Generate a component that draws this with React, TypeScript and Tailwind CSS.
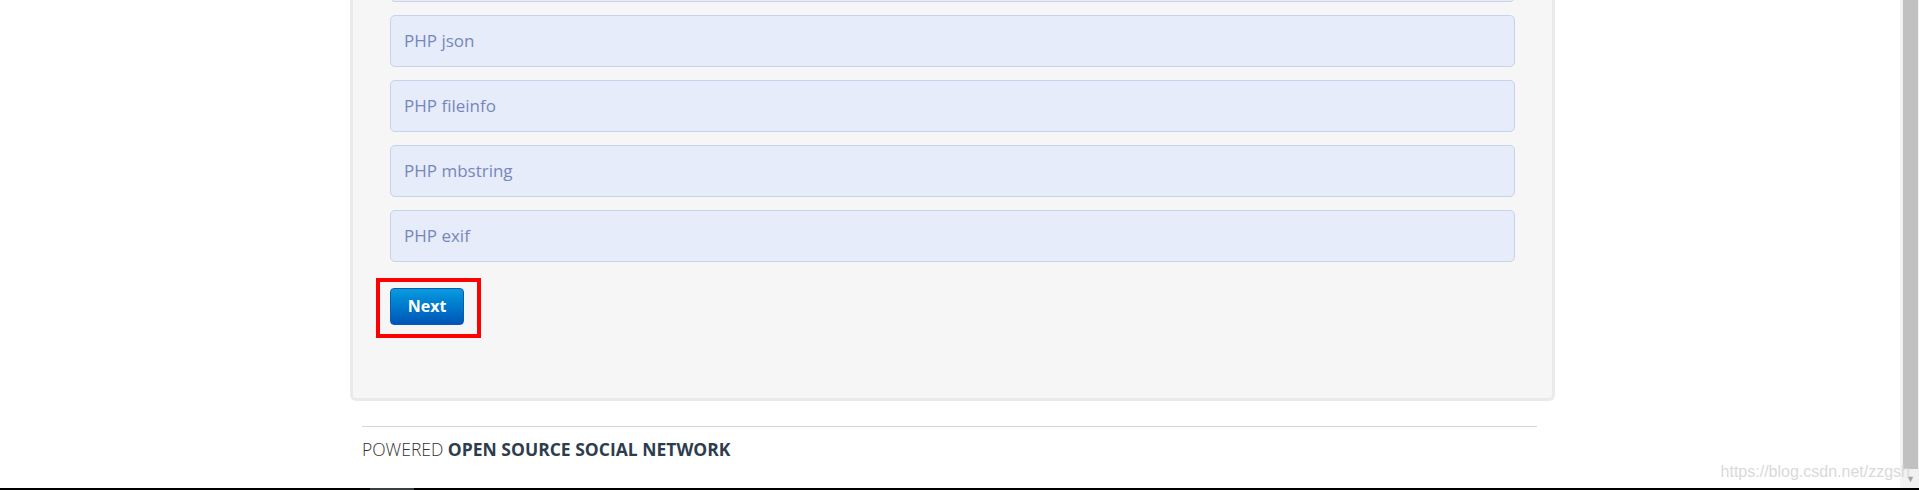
const checks = ["PHP curl", "PHP json", "PHP fileinfo", "PHP mbstring", "PHP exif"];

function CheckItem({ label }: { label: string }) {
    return (
        <div className="flex h-[52px] items-center rounded-[5px] border border-[#c9d2eb] bg-[#e6ecf9] px-[13px] text-[17px] text-[#7687bd]">
            {label}
        </div>
    );
}

export default function App() {
    return (
        <div
            className="relative flex h-[490px] flex-col overflow-hidden bg-white"
            style={{ fontFamily: '"Open Sans", "Liberation Sans", sans-serif' }}
        >
            <div className="flex min-h-0 flex-1">
                <div className="min-w-0 flex-1">
                    <div className="-mt-[50px] ml-[350px] w-[1205px]">
                        <div className="rounded-b-[6px] border-x-[3px] border-b-[3px] border-[#eaeaea] bg-[#f6f6f6] px-[37px] pb-[73px]">
                            <div className="flex flex-col gap-[13px]">
                                {checks.map((c) => (
                                    <CheckItem key={c} label={c} />
                                ))}
                            </div>
                            <div className="relative mt-[26px] w-[74px]">
                                <button className="h-[37px] w-[74px] rounded-[4px] border border-[#0a5cae] bg-gradient-to-b from-[#0b9be0] to-[#0056b7] pb-[1px] text-[16px] font-bold text-white">
                                    Next
                                </button>
                                <div className="absolute -top-[10px] -left-[14px] h-[60px] w-[105px] border-[4px] border-[#ff0000]" />
                            </div>
                        </div>
                        <div className="mt-[25px] ml-[12px] w-[1175px] border-t border-[#d6d6d6] pt-[11px] text-[17.5px] leading-[23px]">
                            <span className="font-light text-[#333333]">POWERED </span>
                            <span className="font-bold text-[#2e3d4d]">OPEN SOURCE SOCIAL NETWORK</span>
                        </div>
                    </div>
                </div>
                <div className="flex w-[19px] flex-col border-l-2 border-[#f3f3f3] bg-[#f1f1f1]">
                    <div className="mx-[1px] flex-1 bg-[#c1c1c1]" />
                    <div className="flex h-[19px] items-center justify-center text-[9px] leading-none text-[#a3a3a3]">
                        ▼
                    </div>
                </div>
            </div>
            <div className="flex h-[2px] bg-black">
                <div className="ml-[370px] w-[44px] bg-[#3a3f42]" />
            </div>
            <div
                className="absolute right-[9px] bottom-[10px] text-[16px] leading-none text-[#d9d9d9]"
                style={{ fontFamily: '"Liberation Sans", Arial, sans-serif' }}
            >
                https://blog.csdn.net/zzgsh
            </div>
        </div>
    );
}
